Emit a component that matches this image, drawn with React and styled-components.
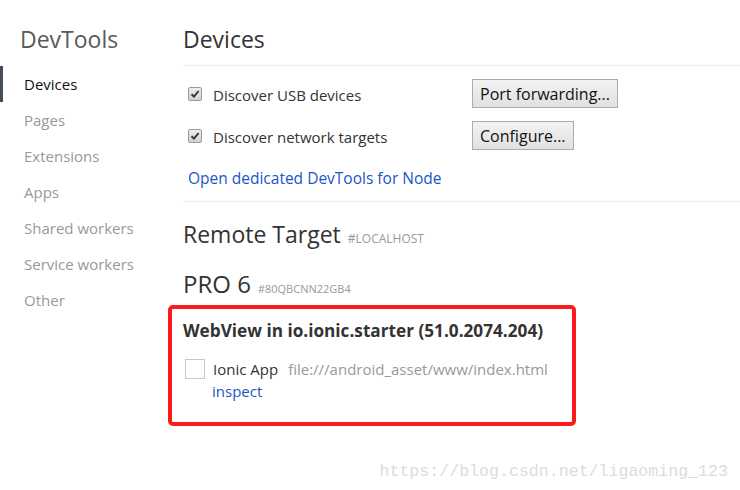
import React from 'react';
import styled, { createGlobalStyle } from 'styled-components';

const GlobalStyle = createGlobalStyle`
  html, body {
    margin: 0;
    padding: 0;
    background: #fff;
  }
  body {
    font-family: "Open Sans", "Noto Sans", Arial, sans-serif;
    color: #333;
  }
`;

const Page = styled.div`
  position: relative;
  display: flex;
  width: 740px;
  height: 490px;
  overflow: hidden;
  background: #fff;
`;

const Sidebar = styled.aside`
  width: 183px;
  flex-shrink: 0;
`;

const Brand = styled.h1`
  margin: 0;
  padding: 23px 0 0 20px;
  height: 66px;
  box-sizing: border-box;
  font-size: 23px;
  line-height: 32px;
  font-weight: 400;
  color: #5a5a5a;
`;

const NavList = styled.ul`
  list-style: none;
  margin: 0;
  padding: 0;
`;

const NavItem = styled.li`
  height: 36px;
  line-height: 36px;
  padding-left: 21px;
  font-size: 15px;
  border-left: 3px solid ${(p) => (p.active ? '#454d58' : 'transparent')};
  color: ${(p) => (p.active ? '#111' : '#999')};
`;

const Main = styled.main`
  flex: 1;
`;

const Header = styled.header`
  height: 66px;
  box-sizing: border-box;
  padding-top: 23px;
  border-bottom: 1px solid #ececec;
`;

const Title = styled.h2`
  margin: 0;
  font-size: 23px;
  line-height: 32px;
  font-weight: 400;
  color: #333;
`;

const Section = styled.section`
  border-bottom: 1px solid #ececec;
  padding-top: 13px;
  padding-bottom: 13px;
`;

const OptionRow = styled.div`
  display: flex;
  align-items: center;
  height: 29px;
  margin-bottom: 13px;
`;

const Label = styled.label`
  display: flex;
  align-items: center;
  width: 284px;
  padding-left: 5px;
  padding-top: 2px;
  font-size: 15px;
  color: #333;
`;

const CheckBox = styled.span`
  display: inline-flex;
  align-items: center;
  justify-content: center;
  width: 12px;
  height: 12px;
  margin: -2px 11px 0 0;
  border: 1px solid #9a9a9a;
  border-radius: 2px;
  background: linear-gradient(#ececec, #d2d2d2);
`;

const BigBox = styled.span`
  display: inline-block;
  width: 18px;
  height: 18px;
  margin: 0 8px 0 2px;
  border: 1px solid #c8c8c8;
  background: #fff;
`;

const Button = styled.button`
  height: 29px;
  padding: 0 7px;
  font-family: "Open Sans", "Noto Sans", Arial, sans-serif;
  font-size: 16px;
  color: #111;
  border: 1px solid #acacac;
  border-radius: 0;
  background: linear-gradient(#f2f2f2, #e1e1e1);
`;

const Link = styled.a`
  display: block;
  margin: 18px 0 0 5px;
  font-size: 15.5px;
  line-height: 20px;
  color: #1a56c8;
  text-decoration: none;
`;

const Heading = styled.div`
  display: flex;
  align-items: baseline;
  gap: 7px;
  font-size: ${(p) => p.size || 23}px;
  line-height: 30px;
  color: #333;
`;

const Tag = styled.span`
  font-size: ${(p) => p.size || 12}px;
  color: #999;
`;

const RemoteBlock = styled.div`
  padding-top: 17px;
  display: flex;
  flex-direction: column;
  gap: 15px;
`;

const TargetBox = styled.div`
  margin: 1px 0 0 -15px;
  width: 408px;
  height: 121px;
  box-sizing: border-box;
  border: 4px solid #fb1b1b;
  border-radius: 5px;
  padding: 11px 0 0 11px;
`;

const TargetName = styled.div`
  font-size: 17.2px;
  line-height: 22px;
  font-weight: 700;
  color: #333;
`;

const PageRow = styled.div`
  display: flex;
  align-items: center;
  margin-top: 16px;
  font-size: 15px;
  line-height: 22px;
`;

const PageTitle = styled.span`
  color: #333;
  margin-right: 10px;
`;

const PageUrl = styled.span`
  color: #999;
`;

const Inspect = styled.a`
  display: block;
  margin-left: 29px;
  font-size: 15px;
  line-height: 22px;
  color: #1a56c8;
`;

const Watermark = styled.div`
  position: absolute;
  right: 12px;
  bottom: 9px;
  font-family: "Liberation Mono", "DejaVu Sans Mono", monospace;
  font-size: 16.6px;
  color: #dcdcdc;
  pointer-events: none;
`;

const Check = () => (
  <svg width="10" height="10" viewBox="0 0 10 10">
    <path d="M1.5 5.2 L4 7.6 L8.6 2" fill="none" stroke="#333" strokeWidth="1.9" />
  </svg>
);

const nav = ['Devices', 'Pages', 'Extensions', 'Apps', 'Shared workers', 'Service workers', 'Other'];

export default function App() {
  return (
    <Page>
      <GlobalStyle />
      <Sidebar>
        <Brand>DevTools</Brand>
        <NavList>
          {nav.map((n, i) => (
            <NavItem key={n} active={i === 0}>{n}</NavItem>
          ))}
        </NavList>
      </Sidebar>
      <Main>
        <Header>
          <Title>Devices</Title>
        </Header>
        <Section>
          <OptionRow>
            <Label><CheckBox><Check /></CheckBox>Discover USB devices</Label>
            <Button>Port forwarding...</Button>
          </OptionRow>
          <OptionRow>
            <Label><CheckBox><Check /></CheckBox>Discover network targets</Label>
            <Button>Configure...</Button>
          </OptionRow>
          <Link>Open dedicated DevTools for Node</Link>
        </Section>
        <RemoteBlock>
          <Heading>Remote Target <Tag>#LOCALHOST</Tag></Heading>
          <Heading size={24}>PRO 6 <Tag size={11}>#80QBCNN22GB4</Tag></Heading>
        </RemoteBlock>
        <TargetBox>
          <TargetName>WebView in io.ionic.starter (51.0.2074.204)</TargetName>
          <PageRow>
            <BigBox />
            <PageTitle>Ionic App</PageTitle>
            <PageUrl>file:///android_asset/www/index.html</PageUrl>
          </PageRow>
          <Inspect>inspect</Inspect>
        </TargetBox>
      </Main>
      <Watermark>https://blog.csdn.net/ligaoming_123</Watermark>
    </Page>
  );
}
